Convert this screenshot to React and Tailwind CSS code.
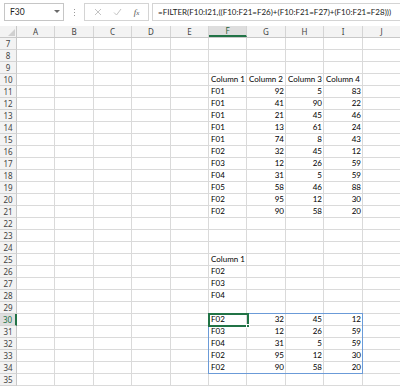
import React from "react";

const COLS = ["A", "B", "C", "D", "E", "F", "G", "H", "I", "J"];
const WIDTHS = ["w-[38px]", "w-[39px]", "w-[38px]", "w-[39px]", "w-[38px]", "w-[38px]", "w-[39px]", "w-[38px]", "w-[39px]", "w-[38px]"];

const DATA = {
  10: ["Column 1", "Column 2", "Column 3", "Column 4"],
  11: ["F01", 92, 5, 83],
  12: ["F01", 41, 90, 22],
  13: ["F01", 21, 45, 46],
  14: ["F01", 13, 61, 24],
  15: ["F01", 74, 8, 43],
  16: ["F02", 32, 45, 12],
  17: ["F03", 12, 26, 59],
  18: ["F04", 31, 5, 59],
  19: ["F05", 58, 46, 88],
  20: ["F02", 95, 12, 30],
  21: ["F02", 90, 58, 20],
  25: ["Column 1"],
  26: ["F02"],
  27: ["F03"],
  28: ["F04"],
  30: ["F02", 32, 45, 12],
  31: ["F03", 12, 26, 59],
  32: ["F04", 31, 5, 59],
  33: ["F02", 95, 12, 30],
  34: ["F02", 90, 58, 20],
};

const ROWS = [];
for (let r = 7; r <= 35; r++) ROWS.push(r);

function Cell({ value, width }) {
  const isNum = typeof value === "number";
  return (
    <div
      className={`${width} h-[12px] shrink-0 border-r border-b border-[#dadada] flex items-end overflow-visible whitespace-nowrap leading-[11px] ${
        isNum ? "justify-end pr-[1px]" : "justify-start pl-[2px]"
      }`}
    >
      {value !== undefined ? <span className="relative z-10">{value}</span> : null}
    </div>
  );
}

export default function App() {
  return (
    <div className="w-[400px] h-[387px] overflow-hidden bg-white text-black font-['Lato',sans-serif] text-[8px]">
      {/* Formula bar */}
      <div className="h-[26px] flex items-start pt-[3px]">
        <div className="ml-[4px] w-[60px] h-[18px] border border-[#c6c6c6] flex items-center justify-between pl-[5px] pr-[3px] text-[8.5px] text-[#222]">
          <span>F30</span>
          <svg width="6" height="4" viewBox="0 0 6 4">
            <path d="M0 0 L6 0 L3 3 Z" fill="#6a6a6a" />
          </svg>
        </div>
        <div className="w-[20px] h-[18px] flex flex-col items-center justify-center gap-[2px]">
          <div className="w-[1px] h-[1px] bg-[#9a9a9a]" />
          <div className="w-[1px] h-[1px] bg-[#9a9a9a]" />
          <div className="w-[1px] h-[1px] bg-[#9a9a9a]" />
        </div>
        <div className="w-[65px] h-[18px] border border-[#d4d4d4] flex items-center justify-around px-[3px]">
          <svg width="8" height="8" viewBox="0 0 8 8">
            <path d="M1 1 L7 7 M7 1 L1 7" stroke="#c4c4c4" strokeWidth="1" />
          </svg>
          <svg width="9" height="8" viewBox="0 0 9 8">
            <path d="M1 4.5 L3.5 7 L8 1" stroke="#c4c4c4" strokeWidth="1" fill="none" />
          </svg>
          <span className="font-['Liberation_Serif',serif] italic text-[9px] text-[#555] leading-none">
            f<span className="text-[7px]">x</span>
          </span>
        </div>
        <div className="ml-[3px] flex-1 h-[18px] border border-[#d4d4d4] border-r-0 flex items-center pl-[5px] whitespace-nowrap overflow-hidden text-[8px] text-[#222]">
          =FILTER(F10:I21,((F10:F21=F26)+(F10:F21=F27)+(F10:F21=F28)))
        </div>
      </div>

      {/* Grid */}
      <div className="relative">
        {/* header row */}
        <div className="flex h-[12px] bg-[#f3f3f3] border-b border-[#c8c8c8] font-['Noto_Sans',sans-serif] text-[8px] text-[#444]">
          <div className="w-[17px] h-full shrink-0 border-r border-[#c8c8c8] flex items-end justify-end p-[1px]">
            <svg width="7" height="7" viewBox="0 0 7 7">
              <path d="M7 0 L7 7 L0 7 Z" fill="#d0d0d0" />
            </svg>
          </div>
          {COLS.map((c, i) => (
            <div
              key={c}
              className={`${WIDTHS[i]} h-full shrink-0 border-r border-[#d4d4d4] flex items-center justify-center leading-none ${
                c === "F" ? "bg-[#dedede] border-b-2 border-b-[#217346] text-[#1e5e38]" : ""
              }`}
            >
              {c}
            </div>
          ))}
        </div>

        {ROWS.map((r) => {
          const vals = DATA[r] || [];
          const sel = r === 30;
          return (
            <div key={r} className="flex h-[12px]">
              <div
                className={`w-[17px] h-full shrink-0 border-b border-[#d4d4d4] flex items-center justify-center leading-none font-['Noto_Sans',sans-serif] text-[8px] ${
                  sel
                    ? "bg-[#dedede] text-[#217346] border-r-2 border-r-[#217346]"
                    : "bg-[#f3f3f3] text-[#444] border-r border-r-[#c8c8c8]"
                }`}
              >
                {r}
              </div>
              {COLS.map((c, i) => {
                const idx = i - 5;
                const v = idx >= 0 && idx < 4 ? vals[idx] : undefined;
                return <Cell key={c} value={v} width={WIDTHS[i]} />;
              })}
            </div>
          );
        })}

        {/* spill range outline F30:I34 */}
        <div className="absolute left-[208px] top-[287px] w-[155px] h-[61px] border border-[#6b9bd8] pointer-events-none" />
        {/* active cell F30 */}
        <div className="absolute left-[208px] top-[287px] w-[41px] h-[14px] border-2 border-[#217346] pointer-events-none" />
        <div className="absolute left-[246px] top-[298px] w-[4px] h-[4px] bg-[#217346] border border-white pointer-events-none" />
      </div>
    </div>
  );
}
